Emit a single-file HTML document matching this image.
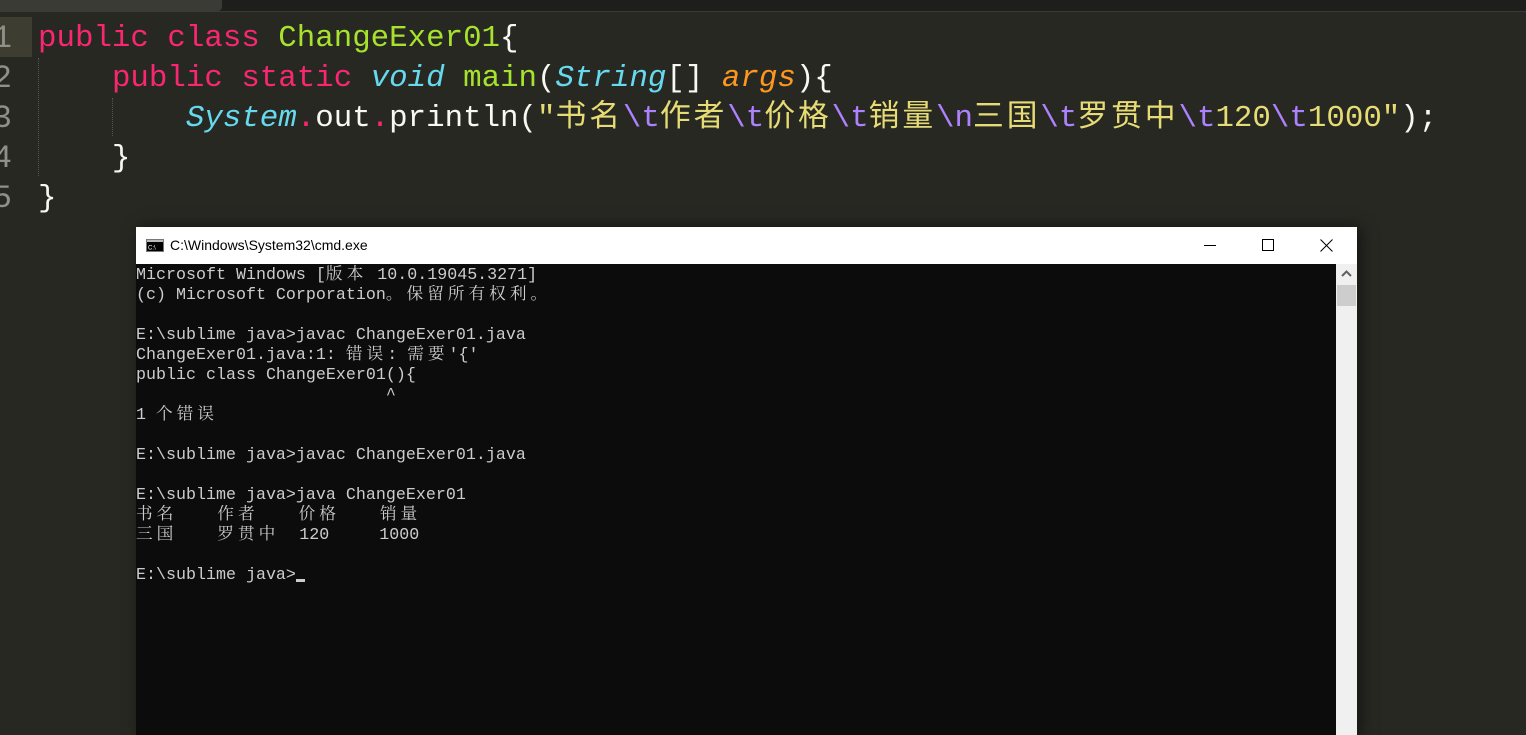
<!DOCTYPE html>
<html><head><meta charset="utf-8"><style>
body{margin:0;width:1526px;height:735px;overflow:hidden;background:#272822;position:relative;font-family:"Liberation Mono","Noto Sans CJK SC",monospace}
.tabbar{position:absolute;left:0;top:0;width:1526px;height:11px;background:#1e1f1c;border-bottom:1px solid #3a3a34}
.tab{position:absolute;left:0;top:0;width:222px;height:11px;background:#3a3b35;border-radius:0 0 4px 0}
.gut{position:absolute;left:-8px;width:20px;height:40px;color:#8f908a;font-size:32px;line-height:40px;text-align:right}
.gbg{position:absolute;left:0;top:17px;width:32px;height:40px;background:#3e3d32}
.code{position:absolute;left:38px;font-size:30.8px;line-height:40px;white-space:pre;color:#f8f8f2}
.k{color:#f92672}.g{color:#a6e22e}.c{color:#66d9ef;font-style:italic}.o{color:#fd971f;font-style:italic}.s{color:#e6db74}.e{color:#ae81ff}
.y{letter-spacing:2.9px}
.guide{position:absolute;width:0;border-left:1px dotted #55554e}
.win{position:absolute;left:136px;top:227px;width:1221px;height:508px;background:#0c0c0c;box-shadow:4px 0 14px rgba(0,0,0,.5);overflow:hidden}
.title{position:absolute;left:0;top:0;width:1221px;height:37px;background:#fff;font-family:"Liberation Sans",sans-serif;font-size:14px;color:#000}
.con{position:absolute;left:0;top:39px;font-size:16.67px;line-height:20px;color:#cccccc;white-space:pre;font-family:"Liberation Mono","Noto Serif CJK SC",monospace}
.z{letter-spacing:4px}
.sb{position:absolute;left:1200px;top:37px;width:21px;height:500px;background:#f0f0f0}
</style></head><body>
<div class="tabbar"><div class="tab"></div></div>
<div class="gbg"></div>
<div class="gut" style="top:19px">1</div>
<div class="gut" style="top:59px">2</div>
<div class="gut" style="top:99px">3</div>
<div class="gut" style="top:139px">4</div>
<div class="gut" style="top:179px">5</div>
<div class="guide" style="left:38px;top:58px;height:118px"></div>
<div class="guide" style="left:112px;top:98px;height:38px"></div>
<div class="code" style="top:19px"><span class="k">public</span> <span class="k">class</span> <span class="g">ChangeExer01</span>{
    <span class="k">public</span> <span class="k">static</span> <span class="c">void</span> <span class="g">main</span>(<span class="c">String</span>[] <span class="o">args</span>){
        <span class="c">System</span><span class="k">.</span>out<span class="k">.</span>println(<span class="s">"<span class="y">书名</span><span class="e">\t</span><span class="y">作者</span><span class="e">\t</span><span class="y">价格</span><span class="e">\t</span><span class="y">销量</span><span class="e">\n</span><span class="y">三国</span><span class="e">\t</span><span class="y">罗贯中</span><span class="e">\t</span>120<span class="e">\t</span>1000"</span>);
    }
}</div>
<div class="win">
<div class="title">
<svg style="position:absolute;left:10px;top:12px" width="18" height="13"><rect x="0.5" y="0.5" width="17" height="12" fill="#000" stroke="#777"/><rect x="1" y="1" width="16" height="2" fill="#bbb"/><text x="2" y="10.5" font-size="6" fill="#fff" font-family="Liberation Sans">C:\</text></svg>
<span style="position:absolute;left:34px;top:10px">C:\Windows\System32\cmd.exe</span>
<div style="position:absolute;left:1068px;top:18px;width:12px;height:1px;background:#000"></div>
<div style="position:absolute;left:1126px;top:12px;width:10px;height:10px;border:1px solid #000"></div>
<svg style="position:absolute;left:1184px;top:12px" width="13" height="13"><path d="M0.5 0.5L12.5 12.5M12.5 0.5L0.5 12.5" stroke="#000" stroke-width="1"/></svg>
</div>
<div class="con">Microsoft Windows [<span class="z">版本</span> 10.0.19045.3271]
(c) Microsoft Corporation<span class="z">。保留所有权利。</span>

E:\sublime java&gt;javac ChangeExer01.java
ChangeExer01.java:1: <span class="z">错误</span>: <span class="z">需要</span>'{'
public class ChangeExer01(){
                         ^
1 <span class="z">个错误</span>

E:\sublime java&gt;javac ChangeExer01.java

E:\sublime java&gt;java ChangeExer01
<span class="z">书名</span>    <span class="z">作者</span>    <span class="z">价格</span>    <span class="z">销量</span>
<span class="z">三国</span>    <span class="z">罗贯中</span>  120     1000

E:\sublime java&gt;<span style="display:inline-block;width:9px;height:3px;background:#ccc;vertical-align:-3px"></span></div>
<div class="sb"><svg style="position:absolute;left:5px;top:6px" width="11" height="7"><path d="M1 6L5.5 1.5L10 6" stroke="#606060" stroke-width="2" fill="none"/></svg><div style="position:absolute;left:1px;top:21px;width:19px;height:21px;background:#cdcdcd"></div></div>
</div>
</body></html>
